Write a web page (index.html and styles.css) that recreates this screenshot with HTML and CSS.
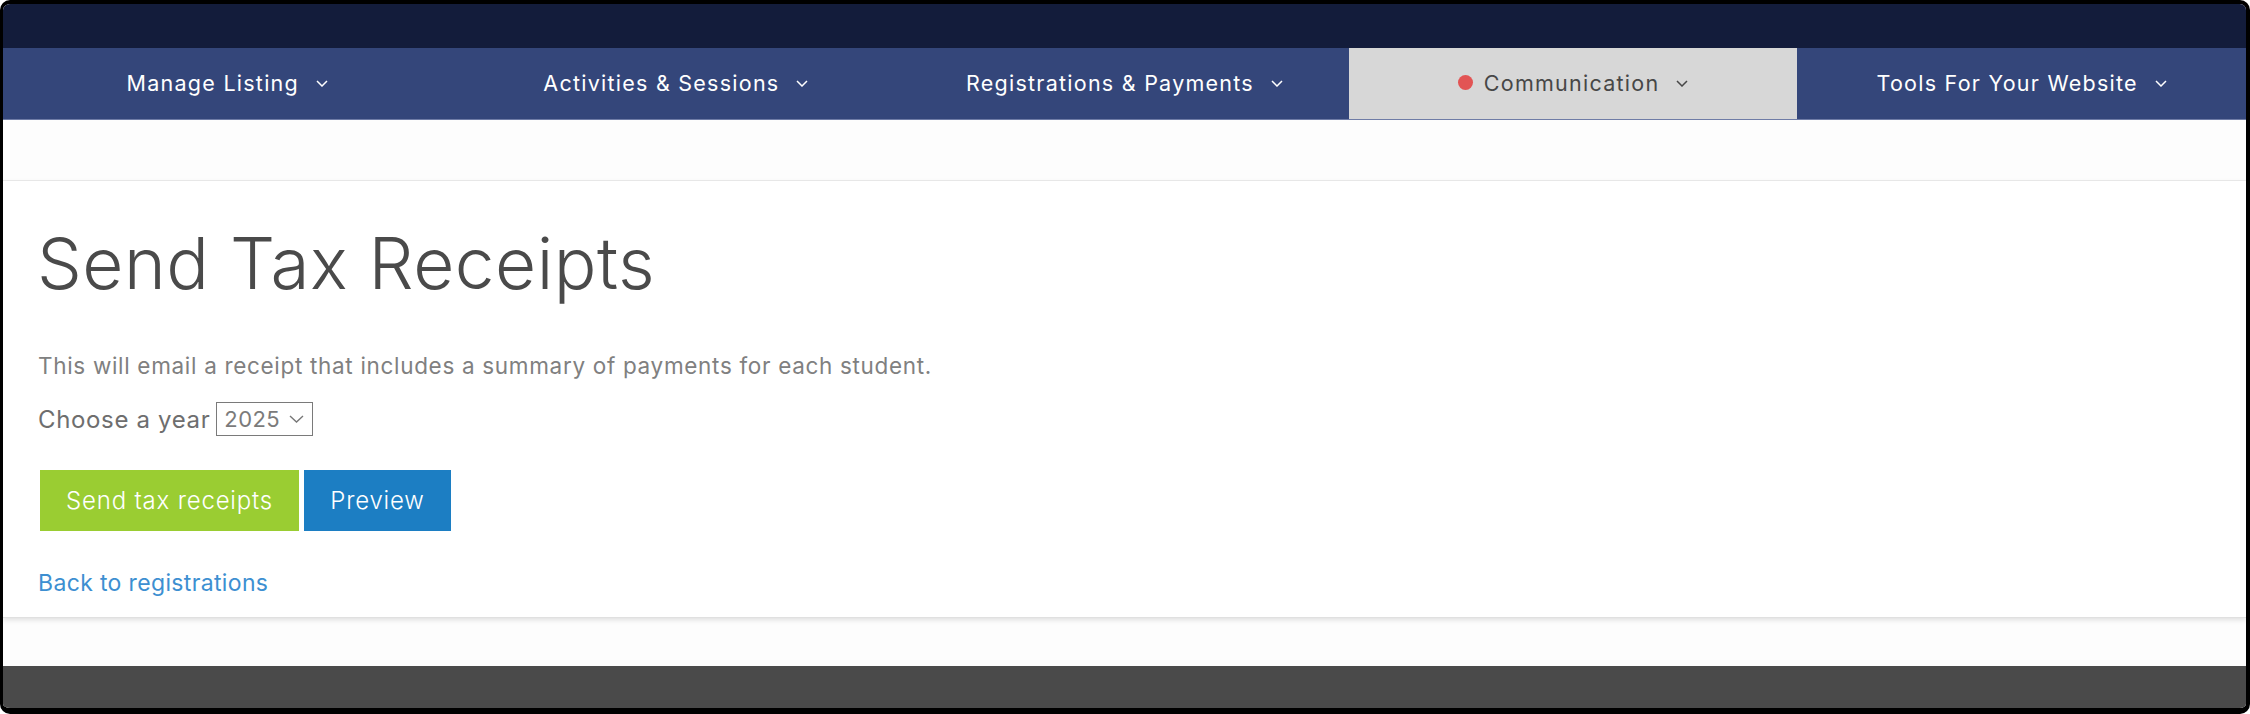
FILE: index.html
```html
<!DOCTYPE html>
<html lang="en">
<head>
<meta charset="utf-8">
<title>Send Tax Receipts</title>
<link rel="stylesheet" href="styles.css">
</head>
<body>
<div class="frame">
  <div class="topbar"></div>
  <nav class="nav">
    <div class="nav-item"><span>Manage Listing</span><svg class="chev" viewBox="0 0 12 7"><polyline points="1,1 6,6 11,1"/></svg></div>
    <div class="nav-item"><span>Activities &amp; Sessions</span><svg class="chev" viewBox="0 0 12 7"><polyline points="1,1 6,6 11,1"/></svg></div>
    <div class="nav-item"><span>Registrations &amp; Payments</span><svg class="chev" viewBox="0 0 12 7"><polyline points="1,1 6,6 11,1"/></svg></div>
    <div class="nav-item active"><span class="dot"></span><span>Communication</span><svg class="chev" viewBox="0 0 12 7"><polyline points="1,1 6,6 11,1"/></svg></div>
    <div class="nav-item"><span>Tools For Your Website</span><svg class="chev" viewBox="0 0 12 7"><polyline points="1,1 6,6 11,1"/></svg></div>
  </nav>
  <div class="spacer"></div>
  <main class="card">
    <h1 class="title">Send Tax Receipts</h1>
    <p class="intro">This will email a receipt that includes a summary of payments for each student.</p>
    <div class="year-row">
      <span class="year-label">Choose a year</span>
      <span class="select"><span>2025</span><svg class="sel-chev" viewBox="0 0 15 8"><polyline points="1,1 7.5,7 14,1"/></svg></span>
    </div>
    <div class="actions">
      <button class="btn btn-green">Send tax receipts</button>
      <button class="btn btn-blue">Preview</button>
    </div>
    <a class="back" href="#">Back to registrations</a>
  </main>
  <div class="below"></div>
  <footer class="footer"></footer>
</div>
</body>
</html>
```

FILE: styles.css
```css
* { box-sizing: border-box; }
html, body { margin: 0; padding: 0; background: #ffffff; }
body { font-family: Inter, "Open Sans", "Liberation Sans", sans-serif; }

.frame {
  width: 2250px;
  height: 714px;
  border-style: solid;
  border-color: #000;
  border-width: 4px 4px 6px 3px;
  border-radius: 10px;
  overflow: hidden;
  display: flex;
  flex-direction: column;
  background: #fdfdfd;
}

.topbar { height: 44px; background: #131c3b; flex: none; }

.nav {
  flex: none;
  height: 72px;
  display: grid;
  grid-template-columns: repeat(5, 1fr);
  background: #34467a;
  border-bottom: 1px solid #6f7ca6;
}
.nav-item {
  display: flex;
  align-items: center;
  justify-content: center;
  gap: 17px;
  color: #ffffff;
  font-size: 21.5px;
  letter-spacing: 1.25px;
  font-weight: 400;
  padding-bottom: 2px;
}
.nav-item.active { background: #d7d7d7; color: #474747; }
.nav-item.active .dot { margin-right: -6px; }
.dot {
  width: 15px; height: 15px; border-radius: 50%;
  background: #e25454; display: inline-block;
}
.chev { width: 12px; height: 7px; fill: none; stroke: currentColor; stroke-width: 1.5; margin-top: 2px; }

.spacer { flex: none; height: 61px; background: #fdfdfd; border-bottom: 1px solid #ececec; }

.card {
  flex: none;
  height: 437px;
  background: #ffffff;
  padding: 40px 35px 0;
  border-bottom: 1px solid #e0e0e0;
  box-shadow: 0 2px 5px rgba(0,0,0,0.12);
  position: relative;
  z-index: 1;
}
.title {
  margin: 0 0 0 -1px;
  font-size: 71px;
  line-height: 84px;
  font-weight: 300;
  color: #4a4a4a;
  letter-spacing: 0.5px;
}
.intro {
  margin: 46px 0 0;
  font-size: 22.5px;
  line-height: 30px;
  color: #808080;
  font-weight: 400;
  letter-spacing: 0.68px;
}
.year-row {
  margin-top: 21px;
  display: flex;
  align-items: center;
  gap: 6px;
}
.year-label { font-size: 24px; color: #6e6e6e; font-weight: 400; letter-spacing: 0.65px; }
.select {
  display: inline-flex;
  align-items: center;
  gap: 9px;
  height: 34px;
  padding: 0 8px 0 7px;
  border: 1px solid #7a7a7a;
  font-size: 22px;
  color: #7b7b7b;
  background: #fff;
  letter-spacing: 0.4px;
}
.sel-chev { width: 15px; height: 8px; fill: none; stroke: #777; stroke-width: 1.4; }

.actions { margin-top: 34px; display: flex; gap: 5px; padding-left: 2px; }
.btn {
  border: 0;
  height: 61px;
  padding: 0;
  font-family: inherit;
  font-size: 24px;
  font-weight: 300;
  letter-spacing: 0.8px;
  color: #ffffff;
  cursor: pointer;
}
.btn-green { background: #9acd32; width: 259px; }
.btn-blue { background: #1c7ec3; width: 147px; }

.back {
  display: inline-block;
  margin-top: 38px;
  font-size: 23px;
  color: #3d8fd1;
  text-decoration: none;
  letter-spacing: 0.35px;
}

.below { flex: 1; background: #fdfdfd; }
.footer { flex: none; height: 42px; background: #4a4a4a; }
```
